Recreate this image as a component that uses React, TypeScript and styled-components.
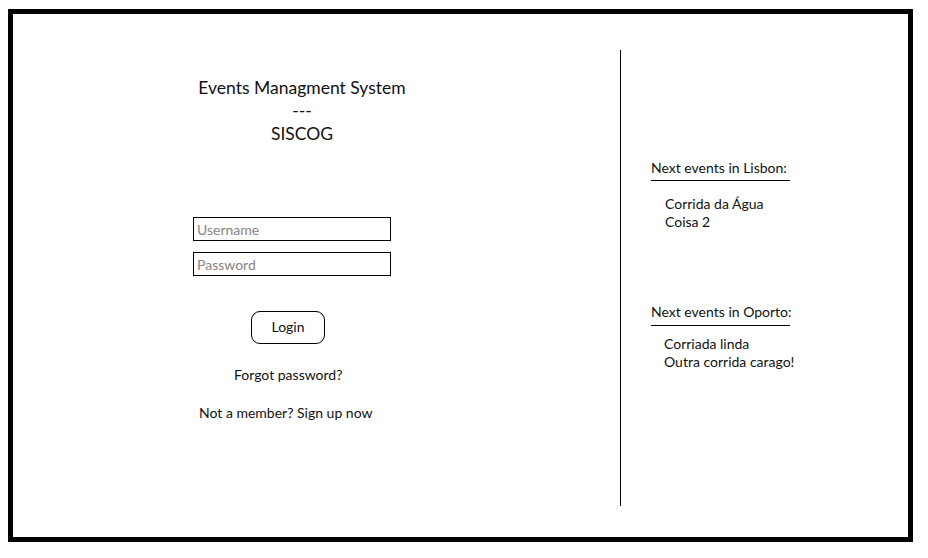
import React from "react";
import styled, { createGlobalStyle } from "styled-components";

const Global = createGlobalStyle`
  html, body { margin: 0; padding: 0; background: #fff; }
  body { font-family: Lato, "Open Sans", sans-serif; color: #111; }
  * { box-sizing: border-box; }
`;

const Frame = styled.div`
  margin: 9px 0 0 8px;
  width: 905px;
  height: 533px;
  border: 5px solid #000;
  display: flex;
  flex-direction: row;
  background: #fff;
`;

const LeftPanel = styled.div`
  width: 607px;
  display: flex;
  flex-direction: column;
  align-items: flex-start;
  padding-top: 62px;
`;

const Title = styled.div`
  margin-left: 159px;
  width: 260px;
  text-align: center;
  font-size: 17.5px;
  line-height: 23px;
`;

const Field = styled.input<{ $top: number }>`
  margin: ${(p) => p.$top}px 0 0 180px;
  width: 198px;
  height: 24px;
  border: 1px solid #000;
  border-radius: 0;
  padding: 0 3px;
  font-family: Lato, "Open Sans", sans-serif;
  font-size: 14px;
  color: #111;
  outline: none;
  background: #fff;
  &::placeholder { color: #858585; }
`;

const LoginButton = styled.button`
  margin: 35px 0 0 238px;
  width: 74px;
  height: 33px;
  border: 1px solid #000;
  border-radius: 9px;
  background: #fff;
  font-family: Lato, "Open Sans", sans-serif;
  font-size: 14px;
  color: #111;
  padding: 0 0 2px 0;
`;

const LinkText = styled.div<{ $top: number; $left: number }>`
  margin: ${(p) => p.$top}px 0 0 ${(p) => p.$left}px;
  font-size: 14px;
  line-height: 18px;
  white-space: nowrap;
`;

const Divider = styled.div`
  margin-top: 36px;
  width: 1px;
  height: 456px;
  background: #000;
`;

const RightPanel = styled.div`
  flex: 1;
  display: flex;
  flex-direction: column;
  align-items: flex-start;
  padding: 145px 0 0 30px;
`;

const Section = styled.div<{ $top: number }>`
  margin-top: ${(p) => p.$top}px;
  display: flex;
  flex-direction: column;
  align-items: flex-start;
`;

const SectionHeading = styled.div<{ $pad: number }>`
  width: 139px;
  font-size: 14px;
  line-height: 18px;
  white-space: nowrap;
  padding-bottom: ${(p) => p.$pad}px;
  border-bottom: 1px solid #000;
`;

const EventList = styled.ul<{ $indent: number; $top: number }>`
  list-style: none;
  margin: ${(p) => p.$top}px 0 0 ${(p) => p.$indent}px;
  padding: 0;
  font-size: 14px;
  line-height: 18px;
  white-space: nowrap;
`;

export default function App() {
  return (
    <>
      <Global />
      <Frame>
        <LeftPanel>
          <Title>
            Events Managment System
            <br />
            ---
            <br />
            SISCOG
          </Title>
          <Field $top={72} placeholder="Username" />
          <Field $top={11} placeholder="Password" type="password" />
          <LoginButton>Login</LoginButton>
          <LinkText $top={22} $left={221}>Forgot password?</LinkText>
          <LinkText $top={20} $left={186}>Not a member? Sign up now</LinkText>
        </LeftPanel>
        <Divider />
        <RightPanel>
          <Section $top={0}>
            <SectionHeading $pad={3}>Next events in Lisbon:</SectionHeading>
            <EventList $indent={14} $top={14}>
              <li>Corrida da Água</li>
              <li>Coisa 2</li>
            </EventList>
          </Section>
          <Section $top={72}>
            <SectionHeading $pad={4}>Next events in Oporto:</SectionHeading>
            <EventList $indent={13} $top={9}>
              <li>Corriada linda</li>
              <li>Outra corrida carago!</li>
            </EventList>
          </Section>
        </RightPanel>
      </Frame>
    </>
  );
}
